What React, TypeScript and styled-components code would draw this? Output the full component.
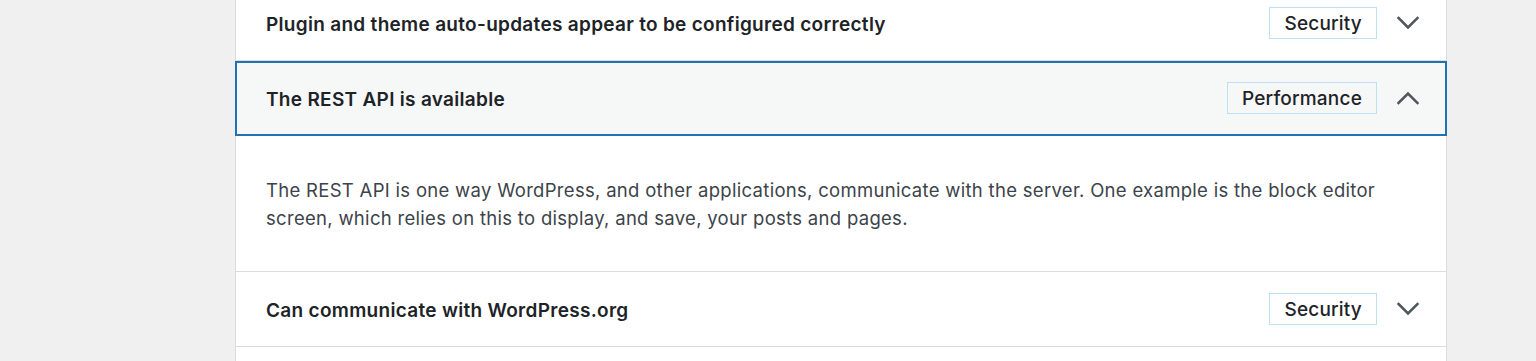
import React from "react";
import styled, { createGlobalStyle, css } from "styled-components";

const Global = createGlobalStyle`
  html, body { margin: 0; padding: 0; background: #f0f0f1; }
  body { font-family: Inter, "Noto Sans", "Liberation Sans", sans-serif; -webkit-font-smoothing: antialiased; }
  * { box-sizing: border-box; }
`;

const Page = styled.div`
  height: 361px;
  overflow: hidden;
  padding: 0 89px 0 235px;
`;

const Panel = styled.div`
  margin-top: -14px;
  background: #fff;
  border: 1px solid #dcdcde;
  border-top: none;
`;

const Section = styled.div`
  border-bottom: 1px solid #dcdcde;
`;

const Trigger = styled.button<{ $open?: boolean }>`
  display: flex;
  align-items: center;
  width: 100%;
  height: 74px;
  padding: 3px 27px 0 30px;
  border: none;
  background: #fff;
  font-family: inherit;
  text-align: left;
  cursor: pointer;
  ${(p) =>
    p.$open &&
    css`
      width: calc(100% + 2px);
      margin: 0 -1px;
      height: 75px;
      padding: 2px 26px 0 29px;
      background: #f6f7f7;
      border: 2px solid #2271b1;
    `}
`;

const Title = styled.span`
  flex: 1;
  font-size: 19px;
  font-weight: 600;
  color: #1d2327;
  letter-spacing: 0.3px;
`;

const Badge = styled.span`
  display: inline-flex;
  align-items: center;
  height: 32px;
  padding: 0 14px;
  margin-top: -3px;
  border: 1px solid #bde0f3;
  font-size: 19px;
  font-weight: 500;
  letter-spacing: 0.2px;
  color: #1d2327;
`;

const Chevron = styled.svg`
  margin-left: 20px;
  margin-top: -3px;
  width: 22px;
  height: 22px;
  flex: none;
`;

const Content = styled.div`
  padding: 40px 30px 39px;
`;

const Text = styled.p`
  margin: 0;
  max-width: 1130px;
  font-size: 18.5px;
  line-height: 28px;
  letter-spacing: 0.3px;
  color: #3c434a;
`;

function Icon({ up }: { up?: boolean }) {
  return (
    <Chevron viewBox="0 0 22 22" fill="none" aria-hidden>
      <path
        d={up ? "M1.5 16 L11 6.5 L20.5 16" : "M1.5 6 L11 15.5 L20.5 6"}
        stroke="#50575e"
        strokeWidth="2.6"
        strokeLinecap="square"
      />
    </Chevron>
  );
}

export default function App() {
  return (
    <>
      <Global />
      <Page>
        <Panel>
          <Section>
            <Trigger>
              <Title>Plugin and theme auto-updates appear to be configured correctly</Title>
              <Badge>Security</Badge>
              <Icon />
            </Trigger>
          </Section>
          <Section>
            <Trigger $open>
              <Title>The REST API is available</Title>
              <Badge>Performance</Badge>
              <Icon up />
            </Trigger>
            <Content>
              <Text>
                The REST API is one way WordPress, and other applications, communicate with the server. One
                example is the block editor screen, which relies on this to display, and save, your posts and
                pages.
              </Text>
            </Content>
          </Section>
          <Section>
            <Trigger>
              <Title>Can communicate with WordPress.org</Title>
              <Badge>Security</Badge>
              <Icon />
            </Trigger>
          </Section>
          <Section>
            <Trigger>
              <Title>&nbsp;</Title>
            </Trigger>
          </Section>
        </Panel>
      </Page>
    </>
  );
}
